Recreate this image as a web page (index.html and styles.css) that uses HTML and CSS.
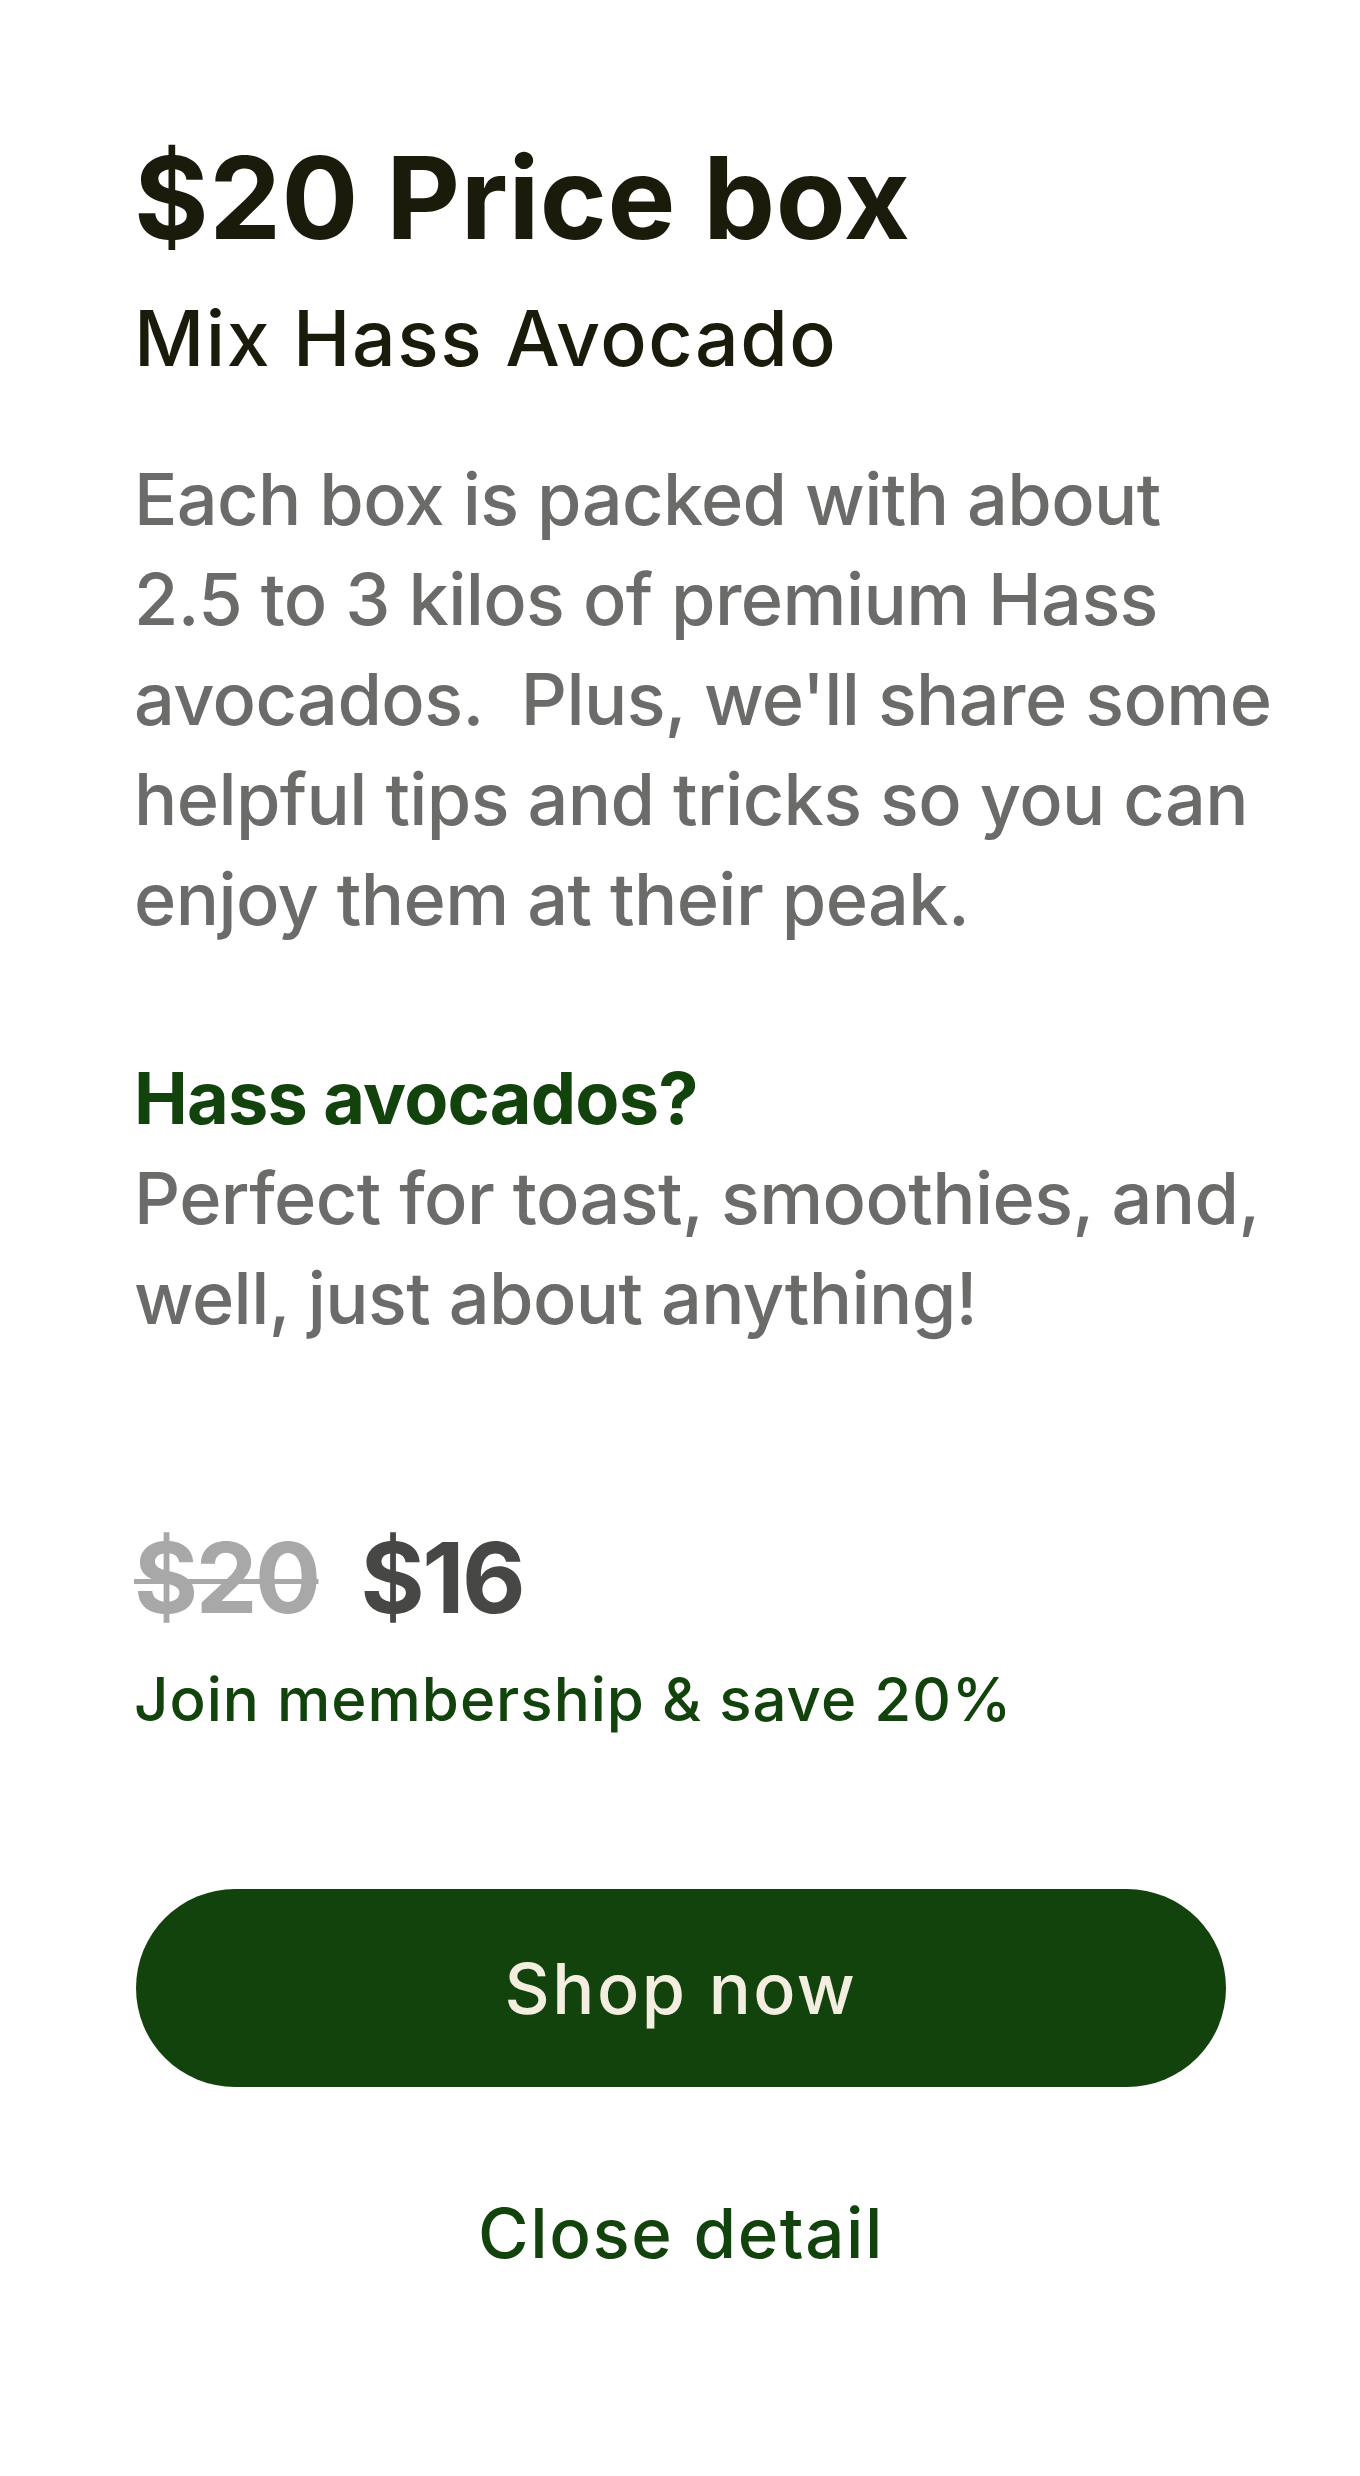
FILE: index.html
```html
<!DOCTYPE html>
<html lang="en">
<head>
    <meta charset="UTF-8">
    <meta name="viewport" content="width=device-width, initial-scale=1.0">
    <title>$20 Price box</title>
    <link rel="stylesheet" href="styles.css">
</head>
<body>

    <div class="detail">
        <h1 class="title">$20 Price box</h1>
        <h2 class="subtitle">Mix Hass Avocado</h2>

        <p class="text">Each box is packed with about 2.5 to 3 kilos of premium Hass avocados.&nbsp; Plus, we'll share some helpful tips and tricks so you can enjoy them at their peak.</p>

        <div class="why">
            <h3 class="whyTitle">Hass avocados?</h3>
            <p class="text">Perfect for toast, smoothies, and, well, just about anything!</p>
        </div>

        <div class="prices">
            <span class="oldPrice">$20</span>
            <span class="newPrice">$16</span>
        </div>
        <p class="member">Join membership &amp; save 20%</p>

        <div class="actions">
            <button class="shopBtn">Shop now</button>
            <button class="closeBtn">Close detail</button>
        </div>
    </div>

</body>
</html>
```

FILE: styles.css
```css
body {
    margin: 0;
    background: #ffffff;
    font-family: Inter, "Noto Sans", sans-serif;
}
.detail {
    padding: 130px 78px 200px 134px;
}
.title {
    margin: 0;
    font-size: 114px;
    line-height: 136px;
    font-weight: 700;
    letter-spacing: 0.5px;
    color: #1b1b0c;
}
.subtitle {
    margin: 22px 0 0 0;
    font-size: 77px;
    line-height: 100px;
    font-weight: 500;
    letter-spacing: 1.5px;
    color: #1b1b0c;
}
.text {
    margin: 0;
    font-size: 72px;
    line-height: 100px;
    font-weight: 500;
    letter-spacing: -0.6px;
    color: #6b6c69;
}
.detail > .text {
    margin-top: 61px;
}
.why {
    margin-top: 99px;
}
.whyTitle {
    margin: 0;
    font-size: 72px;
    line-height: 100px;
    font-weight: 700;
    letter-spacing: -0.8px;
    color: #13430c;
}
.prices {
    margin-top: 170px;
    display: flex;
    gap: 42px;
    font-size: 98px;
    line-height: 120px;
    font-weight: 700;
    letter-spacing: -2.5px;
}
.oldPrice {
    color: #a8a8a8;
    text-decoration: line-through;
    text-decoration-thickness: 5px;
}
.newPrice {
    color: #474846;
}
.member {
    margin: 21px 0 0 0;
    font-size: 60px;
    line-height: 80px;
    font-weight: 500;
    letter-spacing: 1px;
    color: #13430c;
}
.actions {
    width: 1090px;
    margin: 150px 0 0 2px;
}
.shopBtn {
    display: block;
    width: 100%;
    height: 198px;
    padding: 0;
    border: none;
    border-radius: 99px;
    background: #13430c;
    color: #f4eee1;
    font-family: Inter, "Noto Sans", sans-serif;
    font-size: 70px;
    font-weight: 500;
    letter-spacing: 2.5px;
    cursor: pointer;
}
.closeBtn {
    display: block;
    margin: 96px auto 0 auto;
    padding: 0;
    border: none;
    background: none;
    font-family: Inter, "Noto Sans", sans-serif;
    font-size: 69px;
    line-height: 100px;
    font-weight: 500;
    letter-spacing: 1.6px;
    color: #13430c;
    cursor: pointer;
}
```
